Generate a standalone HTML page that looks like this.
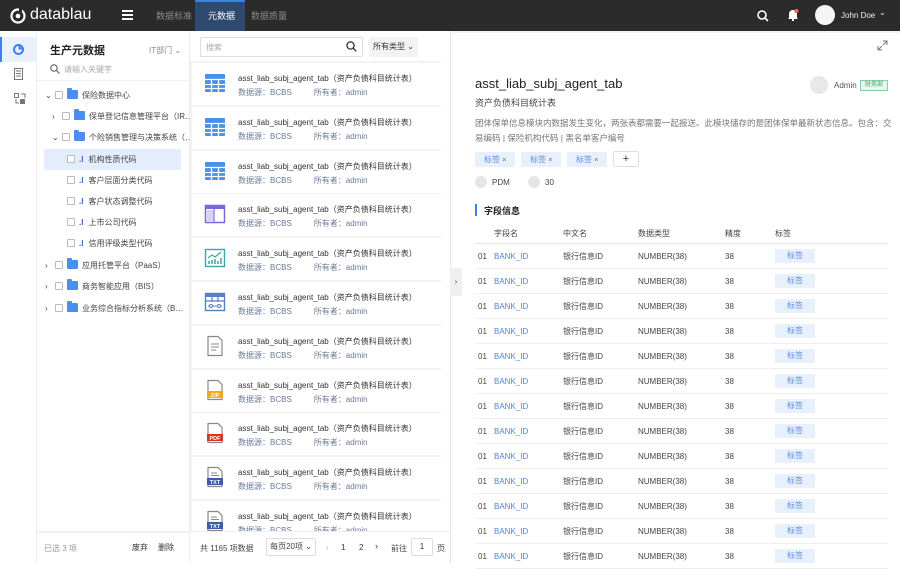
<!DOCTYPE html><html><head><meta charset="utf-8"><style>
*{box-sizing:border-box;margin:0;padding:0}
body{width:900px;height:563px;overflow:hidden;font-family:"Liberation Sans","Noto Sans CJK SC",sans-serif;background:#fff;position:relative;color:#333}
.a{position:absolute}
.top{left:0;top:0;width:900px;height:31px;background:#2b2b2b}
.nav{top:0;height:31px;line-height:32px;font-size:9px;color:#8a8a8a}
.rail{left:0;top:31px;width:37px;height:532px;background:#fff;border-right:1px solid #eee}
.tree{left:37px;top:31px;width:153px;height:532px;background:#fff;border-right:1px solid #eee}
.ti{position:absolute;font-size:8px;color:#444;white-space:nowrap;height:20px;line-height:20px}
.cb{display:inline-block;width:8px;height:8px;border:1px solid #bbb;border-radius:1px;vertical-align:-1px;margin-right:4px;background:#fff}
.fd{display:inline-block;width:11px;height:9px;background:#4a8ef0;border-radius:1px;vertical-align:-1px;margin-right:4px;position:relative}
.fd:before{content:"";position:absolute;left:0;top:-2px;width:5px;height:3px;background:#4a8ef0;border-radius:1px 1px 0 0}
.bar{display:inline-block;font-size:8px;color:#3466c8;margin-right:5px;font-weight:bold}
.arr{display:inline-block;width:8px;font-size:8px;color:#444;margin-right:2px}
.list{left:190px;top:31px;width:251px;height:532px;background:#f3f3f3}
.item{position:absolute;left:2px;width:249px;height:42px;background:#fff}
.item .t{position:absolute;left:46px;top:10px;font-size:8px;color:#333;white-space:nowrap}
.item .s{position:absolute;left:46px;top:24px;font-size:8px;color:#6b7a99;white-space:nowrap}
.item .s span{margin-left:22px}
.item svg{position:absolute;left:12px;top:9px}
.det{left:451px;top:31px;width:449px;height:532px;background:#fff;border-left:1px solid #e8e8e8}
.row{position:absolute;left:475px;width:413px;height:25px;border-bottom:1px solid #eee;font-size:8px;line-height:25px;color:#444}
.row span{position:absolute}
.tag{background:#e8f0fc;color:#5a8ee0;text-align:center;width:40px;height:14px;line-height:14px;top:5px;border-radius:1px}
</style></head><body>
<div class="a top"></div>
<svg class="a" style="left:10px;top:8px" width="16" height="16" viewBox="0 0 16 16"><circle cx="8" cy="8" r="6.5" fill="none" stroke="#fff" stroke-width="2.2"/><circle cx="8" cy="8" r="2.3" fill="#fff"/><rect x="9" y="0" width="3" height="4" fill="#2b2b2b"/></svg>
<div class="a" style="left:30px;top:6px;font-size:16px;color:#fff">datablau</div>
<div class="a" style="left:122px;top:10px;width:11px;height:2px;background:#fff;box-shadow:0 4px 0 #fff,0 8px 0 #fff"></div>
<div class="a nav" style="left:156px">数据标准</div>
<div class="a" style="left:195px;top:0;width:50px;height:31px;background:#2e4a70;border-top:2px solid #3b7ff0"></div>
<div class="a nav" style="left:208px;color:#fff">元数据</div>
<div class="a nav" style="left:251px">数据质量</div>
<svg class="a" style="left:757px;top:10px" width="12" height="12"><circle cx="5" cy="5" r="4" fill="none" stroke="#fff" stroke-width="1.6"/><path d="M8 8l3 3" stroke="#fff" stroke-width="1.6"/></svg>
<svg class="a" style="left:787px;top:8px" width="12" height="14"><path d="M2 10V6a4 4 0 0 1 8 0v4l1 1H1z" fill="#fff"/><rect x="5" y="11" width="2" height="2" fill="#fff"/><circle cx="9.5" cy="3" r="2" fill="#f26a3a"/></svg>
<div class="a" style="left:815px;top:5px;width:20px;height:20px;border-radius:50%;background:#f5f5f5"></div>
<div class="a" style="left:841px;top:11px;font-size:8px;color:#eee">John Doe</div>
<div class="a" style="left:879px;top:8px;font-size:8px;color:#eee">⌄</div>

<div class="a rail"></div>
<div class="a" style="left:0;top:37px;width:37px;height:25px;background:#eaf1fd;border-left:2px solid #3b7ff0"></div>
<svg class="a" style="left:13px;top:44px" width="11" height="11"><circle cx="5.5" cy="5.5" r="4.5" fill="none" stroke="#3b7ff0" stroke-width="2"/><path d="M5.5 1v4.5h4.5" fill="#3b7ff0"/></svg>
<svg class="a" style="left:14px;top:68px" width="11" height="12"><rect x="0.5" y="0.5" width="8" height="11" fill="none" stroke="#777"/><path d="M2 3h5M2 5.5h5M2 8h5" stroke="#777"/></svg>
<svg class="a" style="left:14px;top:93px" width="12" height="12"><rect x="0.5" y="0.5" width="4" height="4" fill="none" stroke="#777"/><rect x="6" y="6" width="5" height="5" fill="#777"/><path d="M2 6v4h3M7 1h4v4" fill="none" stroke="#777"/></svg>

<div class="a tree"></div>
<div class="a" style="left:50px;top:42px;font-size:11px;color:#222;font-weight:bold">生产元数据</div>
<div class="a" style="left:149px;top:45px;font-size:8px;color:#888">IT部门 ⌄</div>
<svg class="a" style="left:50px;top:64px" width="10" height="10"><circle cx="4" cy="4" r="3.2" fill="none" stroke="#666" stroke-width="1.2"/><path d="M6.5 6.5l3 3" stroke="#666" stroke-width="1.2"/></svg>
<div class="a" style="left:64px;top:64px;font-size:8px;color:#aaa">请输入关键字</div>
<div class="a" style="left:37px;top:80px;width:153px;height:1px;background:#f0f0f0"></div>
<div class="ti" style="left:45px;top:86px"><span class="arr">⌄</span><span class="cb"></span><span class="fd"></span>保险数据中心</div>
<div class="ti" style="left:52px;top:107px"><span class="arr">›</span><span class="cb"></span><span class="fd"></span>保单登记信息管理平台（IR…</div>
<div class="ti" style="left:52px;top:128px"><span class="arr">⌄</span><span class="cb"></span><span class="fd"></span>个险销售管理与决策系统（…</div>
<div class="a" style="left:44px;top:149px;width:137px;height:21px;background:#e3edfc;border-radius:2px"></div>
<div class="ti" style="left:67px;top:150px"><span class="cb"></span><span class="bar">.l</span>机构性质代码</div>
<div class="ti" style="left:67px;top:171px"><span class="cb"></span><span class="bar">.l</span>客户层面分类代码</div>
<div class="ti" style="left:67px;top:192px"><span class="cb"></span><span class="bar">.l</span>客户状态调整代码</div>
<div class="ti" style="left:67px;top:213px"><span class="cb"></span><span class="bar">.l</span>上市公司代码</div>
<div class="ti" style="left:67px;top:234px"><span class="cb"></span><span class="bar">.l</span>信用评级类型代码</div>
<div class="ti" style="left:45px;top:256px"><span class="arr">›</span><span class="cb"></span><span class="fd"></span>应用托管平台（PaaS）</div>
<div class="ti" style="left:45px;top:277px"><span class="arr">›</span><span class="cb"></span><span class="fd"></span>商务智能应用（BIS）</div>
<div class="ti" style="left:45px;top:299px"><span class="arr">›</span><span class="cb"></span><span class="fd"></span>业务综合指标分析系统（B…</div>
<div class="a" style="left:37px;top:531px;width:153px;height:2px;background:#f0f0f0"></div>
<div class="a" style="left:44px;top:543px;font-size:8px;color:#999">已选 3 项</div>
<div class="a" style="left:132px;top:542px;font-size:8px;color:#333">废弃</div>
<div class="a" style="left:158px;top:542px;font-size:8px;color:#333">删除</div>

<div class="a list"></div>
<div class="a" style="left:190px;top:31px;width:260px;height:30px;background:#fff"></div>
<div class="a" style="left:200px;top:37px;width:163px;height:20px;border:1px solid #ddd;border-radius:2px;background:#fff"></div>
<div class="a" style="left:206px;top:42px;font-size:8px;color:#aaa">搜索</div>
<svg class="a" style="left:346px;top:41px" width="11" height="11"><circle cx="4.5" cy="4.5" r="3.6" fill="none" stroke="#333" stroke-width="1.3"/><path d="M7 7l3.3 3.3" stroke="#333" stroke-width="1.3"/></svg>
<div class="a" style="left:369px;top:37px;width:49px;height:20px;background:#f3f3f3;border-radius:2px;font-size:8px;line-height:20px;text-align:center;color:#333">所有类型 ⌄</div>
<div id="items"></div>
<div class="a" style="left:190px;top:531px;width:260px;height:32px;background:#fff;border-top:1px solid #eee"></div>
<div class="a" style="left:200px;top:543px;font-size:8px;color:#444">共 1165 项数据</div>
<div class="a" style="left:266px;top:538px;width:50px;height:18px;border:1px solid #ddd;border-radius:2px;font-size:8px;line-height:16px;text-align:center;color:#444">每页20项 ⌄</div>
<div class="a" style="left:326px;top:543px;font-size:8px;color:#bbb">‹</div>
<div class="a" style="left:341px;top:543px;font-size:8px;color:#333">1</div>
<div class="a" style="left:359px;top:543px;font-size:8px;color:#333">2</div>
<div class="a" style="left:375px;top:541px;font-size:9px;color:#333">›</div>
<div class="a" style="left:391px;top:543px;font-size:8px;color:#444">前往</div>
<div class="a" style="left:411px;top:538px;width:22px;height:18px;border:1px solid #ddd;border-radius:2px;font-size:8px;line-height:16px;text-align:center">1</div>
<div class="a" style="left:437px;top:543px;font-size:8px;color:#444">页</div>
<div class="a" style="left:450px;top:31px;width:1px;height:532px;background:#e5e5e5"></div>
<div class="a" style="left:450px;top:268px;width:12px;height:28px;background:#f0f0f0;font-size:8px;line-height:28px;text-align:center;color:#555">›</div>

<div class="a" style="left:452px;top:31px;width:448px;height:2px;background:#f3f3f3"></div>
<svg class="a" style="left:877px;top:40px" width="11" height="11"><path d="M6 1h4v4M10 1L6 5M5 10H1V6M1 10l4-4" fill="none" stroke="#777"/></svg>
<div class="a" style="left:475px;top:76px;font-size:13px;color:#222">asst_liab_subj_agent_tab</div>
<div class="a" style="left:475px;top:96px;font-size:9px;color:#444">资产负债科目统计表</div>
<div class="a" style="left:810px;top:76px;width:18px;height:18px;border-radius:50%;background:#e8e8e8"></div>
<div class="a" style="left:834px;top:81px;font-size:8px;color:#555">Admin</div>
<div class="a" style="left:860px;top:80px;width:28px;height:11px;border:1px solid #7fd0a8;background:#e6f7ee;font-size:6px;line-height:9px;text-align:center;color:#39a86d">财务部</div>
<div class="a" style="left:475px;top:116px;width:418px;font-size:8.5px;line-height:15px;color:#777">团体保单信息模块内数据发生变化，两张表都需要一起报送。此模块储存的是团体保单最新状态信息。包含：交易编码 | 保险机构代码 | 黑名单客户编号</div>
<div class="a" style="left:475px;top:152px;width:40px;height:15px;background:#e8f0fc;font-size:8px;line-height:15px;color:#5a8ee0;padding-left:9px">标签 <span style="color:#666;font-size:7px">×</span></div>
<div class="a" style="left:521px;top:152px;width:40px;height:15px;background:#e8f0fc;font-size:8px;line-height:15px;color:#5a8ee0;padding-left:9px">标签 <span style="color:#666;font-size:7px">×</span></div>
<div class="a" style="left:567px;top:152px;width:40px;height:15px;background:#e8f0fc;font-size:8px;line-height:15px;color:#5a8ee0;padding-left:9px">标签 <span style="color:#666;font-size:7px">×</span></div>
<div class="a" style="left:613px;top:151px;width:26px;height:16px;border:1px solid #ddd;border-radius:2px;font-size:11px;line-height:14px;text-align:center;color:#333">+</div>
<div class="a" style="left:475px;top:176px;width:12px;height:12px;border-radius:50%;background:#e5e5e5"></div>
<div class="a" style="left:492px;top:178px;font-size:8px;color:#444">PDM</div>
<div class="a" style="left:528px;top:176px;width:12px;height:12px;border-radius:50%;background:#e5e5e5"></div>
<div class="a" style="left:545px;top:178px;font-size:8px;color:#444">30</div>
<div class="a" style="left:475px;top:204px;width:2px;height:12px;background:#3b7ff0"></div>
<div class="a" style="left:484px;top:204px;font-size:9px;font-weight:bold;color:#222">字段信息</div>
<div class="row" style="top:222px;height:22px;line-height:24px;border-bottom:1px solid #e5e5e5"><span style="left:19px">字段名</span><span style="left:88px">中文名</span><span style="left:163px">数据类型</span><span style="left:250px">精度</span><span style="left:300px">标签</span></div>
<div id="rows"></div>
<script>
var T='<svg width="22" height="22"><rect x="1" y="2" width="20" height="18" rx="1" fill="#4a90e8"/><path d="M1 7.5h20M1 12.5h20M1 16.5h20M7.5 7v13M14.5 7v13" stroke="#fff" stroke-width="1.3"/></svg>';
var icons=[T,T,T,
'<svg width="22" height="22"><rect x="1.5" y="2.5" width="19" height="17" fill="#fff" stroke="#7b68d8" stroke-width="1.5"/><rect x="1" y="2" width="20" height="4" fill="#7b68d8"/><rect x="3" y="7" width="6" height="11" fill="#d8d2f5"/><path d="M10 6v14" stroke="#7b68d8" stroke-width="1.2"/></svg>',
'<svg width="22" height="22"><rect x="1.5" y="2.5" width="19" height="17" fill="#fff" stroke="#3aa8a8" stroke-width="1.4"/><path d="M4 11l4-3 3 2 6-5" fill="none" stroke="#3aa8a8" stroke-width="1.3"/><path d="M5 17v-3M8 17v-4M11 17v-5M14 17v-3M17 17v-6" stroke="#3aa8a8" stroke-width="1.5"/></svg>',
'<svg width="22" height="22"><rect x="1.5" y="2.5" width="19" height="17" fill="#fff" stroke="#5a7ec8" stroke-width="1.4"/><rect x="1" y="2" width="20" height="4" fill="#5a7ec8"/><path d="M1 10h20M8 6v5M14 6v5" stroke="#5a7ec8" stroke-width="1.2"/><path d="M4 15h14" stroke="#5a7ec8"/><circle cx="7" cy="15" r="1.5" fill="#fff" stroke="#5a7ec8"/><circle cx="15" cy="15" r="1.5" fill="#fff" stroke="#5a7ec8"/></svg>',
'<svg width="22" height="22"><path d="M4 1.5h10l4 4v15H4z" fill="#fff" stroke="#888" stroke-width="1.2"/><path d="M7 9h8M7 12h8M7 15h5" stroke="#888"/></svg>',
'<svg width="22" height="22"><path d="M4 1.5h10l4 4v15H4z" fill="#fff" stroke="#888" stroke-width="1.2"/><rect x="3" y="12" width="16" height="7" fill="#f5a623"/><text x="11" y="18" font-size="5.5" fill="#fff" text-anchor="middle" font-family="Liberation Sans" font-weight="bold">ZIP</text></svg>',
'<svg width="22" height="22"><path d="M4 1.5h10l4 4v15H4z" fill="#fff" stroke="#888" stroke-width="1.2"/><rect x="3" y="12" width="16" height="7" fill="#e0321e"/><text x="11" y="18" font-size="5.5" fill="#fff" text-anchor="middle" font-family="Liberation Sans" font-weight="bold">PDF</text></svg>'];
var X='<svg width="22" height="22"><path d="M4 1.5h10l4 4v15H4z" fill="#fff" stroke="#888" stroke-width="1.2"/><path d="M7 7h6M7 9.5h8" stroke="#888"/><rect x="3" y="12" width="16" height="7" fill="#3b5ca8"/><text x="11" y="18" font-size="5.5" fill="#fff" text-anchor="middle" font-family="Liberation Sans" font-weight="bold">TXT</text></svg>';
icons.push(X,X);
var h='';
for(var i=0;i<11;i++){var t=63+i*43.8;h+='<div class="item a" style="left:192px;top:'+t+'px;height:'+(i==10?531-t:42)+'px">'+icons[i]+'<div class="t">asst_liab_subj_agent_tab（资产负债科目统计表）</div><div class="s">数据源：BCBS<span>所有者：admin</span></div></div>';}
document.getElementById('items').innerHTML=h;
var r='';
for(var j=0;j<13;j++){r+='<div class="row" style="top:'+(244+j*25)+'px"><span style="left:3px">01</span><span style="left:19px;color:#4a86e0">BANK_ID</span><span style="left:88px">银行信息ID</span><span style="left:163px">NUMBER(38)</span><span style="left:250px">38</span><span class="tag" style="left:300px">标签</span></div>';}
document.getElementById('rows').innerHTML=r;
</script>
</body></html>
